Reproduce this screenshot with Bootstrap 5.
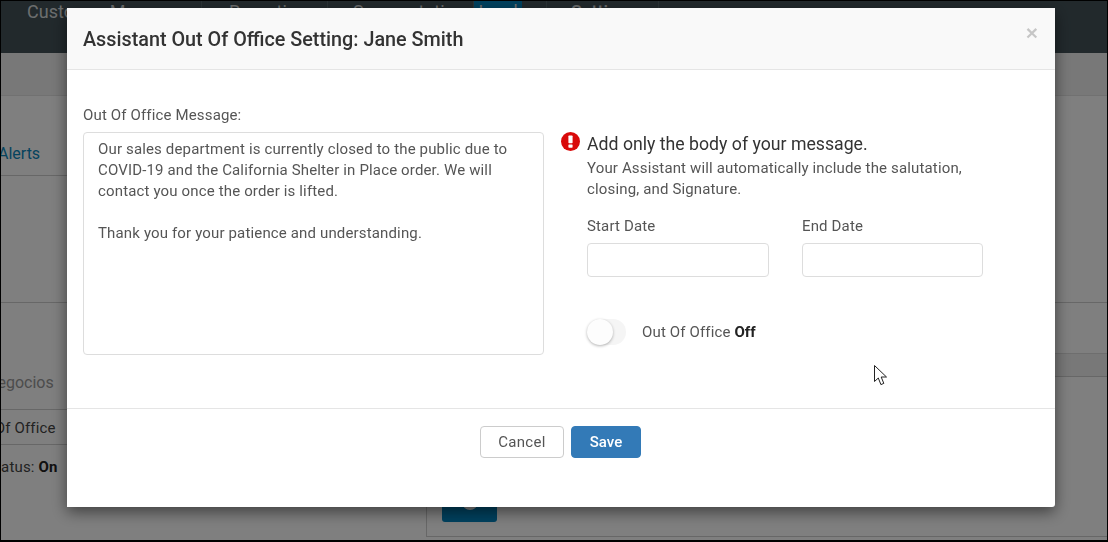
<!DOCTYPE html>
<html lang="en">
<head>
<meta charset="utf-8">
<title>Assistant Out Of Office Setting</title>
<link rel="stylesheet" href="https://cdn.jsdelivr.net/npm/bootstrap@5.3.0/dist/css/bootstrap.min.css">
<style>
html,body{height:542px;overflow:hidden;background:#000}
body{font-family:Roboto,"Liberation Sans",sans-serif;font-size:15px;color:#555}
.screen-frame{height:542px;border-style:solid;border-color:#000;border-width:1px 1px 2px 1px;background:#fff;overflow:hidden;position:relative}
.top-nav{height:52px;background:#445359;color:#d8dcdd;font-size:18px;line-height:24px;overflow:hidden}
.nav-cell{height:52px;border-right:1px solid #56666c;white-space:nowrap;margin-top:-1px}
.cell-a{width:201px;padding-left:26px}
.cell-b{width:126px;padding-left:27px}
.cell-c{width:146px;padding-left:25px}
.cell-d{width:48px;background:#0083be;text-align:center;border-right:0}
.cell-e{width:24px}
.cell-f{width:113px;padding-left:24px;border-left:1px solid #56666c;font-weight:500}
.sub-bar{height:43px;background:#f0f0f0;border-bottom:1px solid #e2e2e2}
.page-left{width:425px;flex:none;color:#666;overflow:hidden}
.page-left .rw{border-bottom:1px solid #cfcfcf}
.rw-1{height:80px;padding-top:47px;color:#0a87bd;font-size:16px;line-height:22px}
.rw-2{height:127px}
.rw-3{height:107px;padding-top:69px;font-size:16px;line-height:22px;color:#999}
.rw-4{height:35px;padding-top:7px;line-height:22px;color:#444;letter-spacing:.15px}
.rw-5{padding-top:11px;line-height:22px;color:#444;letter-spacing:.15px}
.rw-5 b{color:#222}
.clip-a{margin-left:-3px}
.clip-b{margin-left:-15px}
.clip-c{margin-left:-34px}
.clip-d{margin-left:-14px}
.page-right{flex:1;min-width:0}
.rr-1{height:207px;border-bottom:1px solid #cfcfcf}
.rr-2{height:51px;border-bottom:1px solid #dcdcdc}
.rr-3{height:23px;background:#f1f1f1;border-bottom:1px solid #cfcfcf}
.rr-4{height:160px;border-left:1px solid #cfcfcf;border-bottom:1px solid #cfcfcf;padding:83px 0 0 15px}
.blue-tile{width:55px;height:62px;background:#0083be;border-radius:3px;display:flex;align-items:center;justify-content:center}
.white-dot{width:16px;height:16px;border:3px solid #fff;border-radius:50%;margin-top:22px}
.modal-dialog.oo-dialog{max-width:988px;width:988px;margin:8px 0 0 67px}
.oo-dialog .modal-content{border:0;border-radius:0 3px 3px 0;box-shadow:0 5px 15px rgba(0,0,0,.5);height:499px;color:#555}
.oo-dialog .modal-header{height:62px;background:#f9f9f9;border-bottom:1px solid #e5e5e5;padding:0 17px 0 16px;border-radius:0;align-items:flex-start}
.oo-title{font-size:19.8px;font-weight:500;color:#333;line-height:24px;margin:20px 0 0}
.oo-close{font:700 21px/21px "Liberation Sans",sans-serif;color:#000;opacity:.2;background:none;border:0;padding:0;margin-top:14px}
.oo-dialog .modal-body{padding:37px 16px 0;height:338px;flex:none}
.oo-left{width:461px;flex:none}
.oo-label{display:block;font-size:15px;line-height:17px;letter-spacing:.15px;color:#555;margin:0}
.oo-text{display:block;width:461px;height:223px;margin-top:8px;padding:6px 14px;font-size:15px;line-height:21px;letter-spacing:.15px;color:#555;border:1px solid #ddd;border-radius:4px;resize:none;box-shadow:none}
.oo-right{margin-left:17px;padding-top:25px;width:440px}
.oo-icon{width:19px;height:19px;flex:none;margin-right:7px}
.oo-head{font-size:17.7px;line-height:22px;color:#333;margin:0;padding-top:1px}
.oo-sub{letter-spacing:.15px;line-height:21px;margin:3px 0 0}
.oo-dates{margin-top:18px;gap:33px}
.oo-date{width:182px}
.oo-date + .oo-date{width:181px}
.oo-date .form-control{height:34px;margin-top:8px;border:1px solid #ddd;border-radius:4px}
.oo-toggle{margin-top:42px;height:26px}
.oo-track{width:39px;height:26px;border-radius:13px;background:#f5f5f5}
.oo-knob{width:26px;height:26px;border-radius:50%;background:#fdfdfd;box-shadow:0 1px 3px rgba(0,0,0,.3)}
.oo-toggle-text{margin-left:16px;letter-spacing:.15px}
.oo-toggle-text b{color:#222;font-weight:700;letter-spacing:0}
.oo-dialog .modal-footer{border-top:1px solid #e5e5e5;padding:17px 1px 0 0;height:99px;justify-content:center;align-items:flex-start;gap:7px;flex:none}
.oo-dialog .modal-footer .btn{margin:0;height:32px;font-size:15px;line-height:20px;padding:5px 0;border-radius:4px}
.btn-oo-cancel{width:84px;background:#fff;border:1px solid #ccc;color:#555;letter-spacing:.3px}
.oo-dialog .modal-footer .btn-oo-save{width:70px;background:#337ab7;border:1px solid #337ab7;color:#fff;font-weight:500}
.oo-cursor{position:absolute;left:807px;top:357px;width:14px;height:21px}
</style>
</head>
<body>
<div class="screen-frame">
  <div class="top-nav d-flex">
    <div class="nav-cell cell-a">Customer Manager</div>
    <div class="nav-cell cell-b">Reporting</div>
    <div class="nav-cell cell-c">Segmentation</div>
    <div class="nav-cell cell-d">Lead</div>
    <div class="nav-cell cell-e border-0"></div>
    <div class="nav-cell cell-f">Settings</div>
  </div>
  <div class="sub-bar"></div>
  <div class="d-flex">
    <div class="page-left">
      <div class="rw rw-1"><span class="d-block clip-a">Alerts</span></div>
      <div class="rw rw-2"></div>
      <div class="rw rw-3"><span class="d-block clip-b">Negocios</span></div>
      <div class="rw rw-4"><span class="d-block clip-c">Out Of Office</span></div>
      <div class="rw-5"><span class="d-block clip-d">Status: <b>On</b></span></div>
    </div>
    <div class="page-right">
      <div class="rr-1"></div>
      <div class="rr-2"></div>
      <div class="rr-3"></div>
      <div class="rr-4"><div class="blue-tile"><div class="white-dot"></div></div></div>
    </div>
  </div>
</div>
<div class="modal-backdrop show"></div>
<div class="modal d-block" role="dialog" aria-modal="true">
  <div class="modal-dialog oo-dialog">
    <div class="modal-content">
      <div class="modal-header">
        <h5 class="oo-title">Assistant Out Of Office Setting: Jane Smith</h5>
        <button type="button" class="oo-close ms-auto" aria-label="Close">×</button>
      </div>
      <div class="modal-body d-flex">
        <div class="oo-left">
          <label class="oo-label" for="oo-msg">Out Of Office Message:</label>
          <textarea id="oo-msg" class="form-control oo-text">Our sales department is currently closed to the public due to COVID-19 and the California Shelter in Place order. We will contact you once the order is lifted.

Thank you for your patience and understanding.</textarea>
        </div>
        <div class="oo-right">
          <div class="d-flex">
            <svg class="oo-icon" viewBox="0 0 19 19" aria-hidden="true"><circle cx="9.5" cy="9.5" r="9.5" fill="#d90a0a"/><rect x="7.4" y="3.6" width="4.2" height="7.6" rx=".7" fill="#fff"/><rect x="7.4" y="12.4" width="4.2" height="3.4" rx=".7" fill="#fff"/></svg>
            <div>
              <p class="oo-head">Add only the body of your message.</p>
              <p class="oo-sub">Your Assistant will automatically include the salutation,<br>closing, and Signature.</p>
              <div class="d-flex oo-dates">
                <div class="oo-date"><label class="oo-label" for="oo-start">Start Date</label><input id="oo-start" class="form-control" type="text"></div>
                <div class="oo-date"><label class="oo-label" for="oo-end">End Date</label><input id="oo-end" class="form-control" type="text"></div>
              </div>
              <div class="d-flex align-items-center oo-toggle">
                <div class="oo-track d-flex"><div class="oo-knob"></div></div>
                <span class="oo-toggle-text">Out Of Office <b>Off</b></span>
              </div>
            </div>
          </div>
        </div>
      </div>
      <div class="modal-footer">
        <button type="button" class="btn btn-oo-cancel">Cancel</button>
        <button type="button" class="btn btn-oo-save">Save</button>
      </div>
      <svg class="oo-cursor" viewBox="0 0 14 21" aria-hidden="true"><path d="M.5.5V16.5L4.3 13l2.6 6.6 2.9-1.2L7.2 12h5.3z" fill="#fff" stroke="#222" stroke-width="1"/></svg>
    </div>
  </div>
</div>
<script src="https://cdn.jsdelivr.net/npm/bootstrap@5.3.0/dist/js/bootstrap.bundle.min.js"></script>
</body>
</html>
